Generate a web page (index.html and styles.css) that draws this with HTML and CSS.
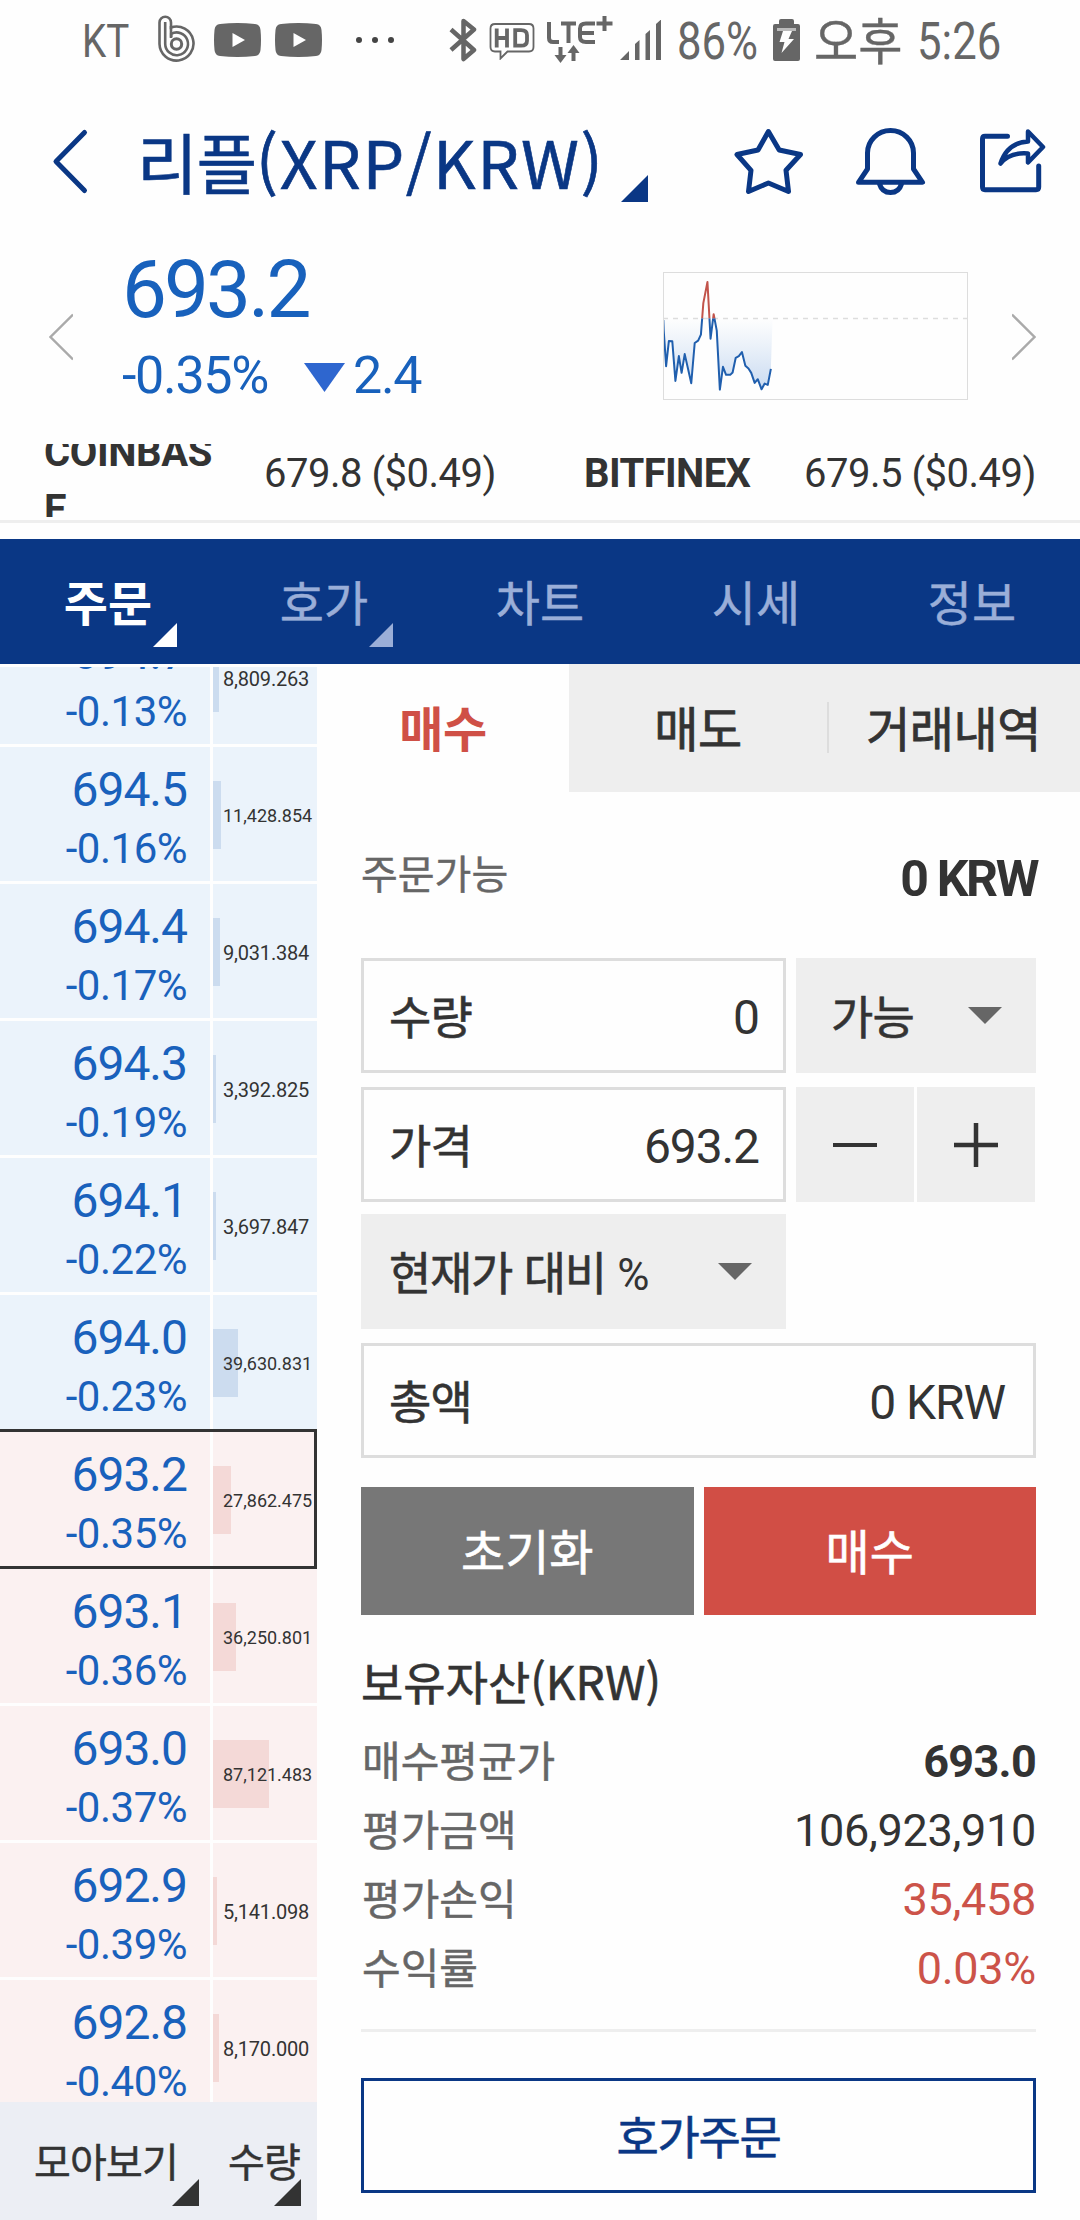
FILE: index.html
```html
<!DOCTYPE html>
<html lang="ko">
<head>
<meta charset="utf-8">
<title>리플(XRP/KRW)</title>
<link rel="stylesheet" href="styles.css">
</head>
<body>
<div class="status">
  <span class="narrow carrier">KT</span>
  <svg class="s-b" width="40" height="50" viewBox="156 15 40 50" fill="none" stroke="#666" stroke-width="2.600"><path d="M159.500 44V22.500a5.750 5.750 0 0 1 11.500 0V27.500A17 17 0 1 1 159.500 44"/><path d="M165.200 22V44a11.400 11.400 0 1 0 6-10.200V37"/><circle cx="176.500" cy="44" r="5.200" stroke-width="3"/><path d="M171 26v12"/></svg>
  <svg class="s-yt" width="47" height="34" viewBox="0 0 47 34"><path d="M6 1Q23.500-1 41 1Q46 1.500 46.500 7Q47.500 17 46.500 27Q46 32.500 41 33Q23.500 35 6 33Q1 32.500.5 27Q-.5 17 .5 7Q1 1.500 6 1Z" fill="#666"/><path d="M18.500 10v14l12.500-7z" fill="#fff"/></svg>
  <svg class="s-yt2" width="47" height="34" viewBox="0 0 47 34"><path d="M6 1Q23.500-1 41 1Q46 1.500 46.500 7Q47.500 17 46.500 27Q46 32.500 41 33Q23.500 35 6 33Q1 32.500.5 27Q-.5 17 .5 7Q1 1.500 6 1Z" fill="#666"/><path d="M18.500 10v14l12.500-7z" fill="#fff"/></svg>
  <svg class="s-dots" width="40" height="8" viewBox="0 0 40 8" fill="#444"><circle cx="4" cy="4" r="3"/><circle cx="20" cy="4" r="3"/><circle cx="36" cy="4" r="3"/></svg>
  <svg class="s-bt" width="28" height="44" viewBox="448 18 28 44" fill="none" stroke="#666" stroke-width="4.500" stroke-linejoin="round"><path d="M450 29.500L473 50l-10.500 9V21L473 29.500L450 50"/></svg>
  <svg class="s-hd" width="46" height="38" viewBox="488 22 46 38" fill="none" stroke="#666"><path d="M494 24h34q4.500 0 4.500 4.500v18.500q0 4.500-4.500 4.500H506.500l-7 7V51.500H494q-4.500 0-4.500-4.500V28.500Q489.500 24 494 24Z" stroke-width="1.800"/><path d="M495.700 28.500v19M506 28.500v19M495.700 38H506M514.200 30.200H520q6 0 6 5V40.700q0 5-6 5H514.200Z" stroke-width="3.800"/></svg>
  <svg class="s-lte" width="66" height="50" viewBox="546 15 66 50" fill="none" stroke="#666" stroke-width="4"><path d="M548 22V38Q548 42 552 42h6M560 23.500h15M567.500 23.500V43M594 23.500h-9q-6 0-6 5v8.500q0 5 6 5h9M579 33h14M595.500 23.500h16M603.500 16v15"/><path d="M559.500 47v10M572.500 61V51"/><path d="M553.500 55h12l-6 8zM566.500 53h12l-6-8z" fill="#666" stroke="none"/></svg>
  <svg class="s-sig" width="42" height="41" viewBox="619 20 42 41" fill="#666"><path d="M619 60l9-9v9zM634 60V44l4.500-4V60zM644.500 60V34l4.500-4V60zM655 60V24l5-4.500V60z"/></svg>
  <span class="narrow percent">86%</span>
  <svg class="s-bat" width="28" height="42" viewBox="0 0 28 42"><path d="M8 0h11q2 0 2 2v3h4q2 0 2 2v33q0 2-2 2H2q-2 0-2-2V7Q0 5 2 5H6V2Q6 0 8 0Z" fill="#666"/><path d="M4 9h19v3H4z" fill="#bbb"/><path d="M10 12h9l-3.500 8H21L8.500 34l3-11H6.500z" fill="#fff"/></svg>
  <span class="narrow ampm">오후</span>
  <span class="narrow clock">5:26</span>
</div>

<header class="header">
  <svg class="back" width="38" height="68" viewBox="51 129 38 68" fill="none" stroke="#0a3785" stroke-width="5" stroke-linecap="round" stroke-linejoin="round"><path d="M84.500 133.500L56 162.500L84.500 191.500"/></svg>
  <h1 class="title">리플<span class="pair">(XRP/KRW)</span></h1>
  <i class="corner corner-title"></i>
  <svg class="h-star" width="74" height="70" viewBox="732 126 74 70" fill="none" stroke="#0a3785" stroke-width="5" stroke-linejoin="round"><path d="M768.400 130.500L779.200 149L800.500 153.500L786 169.300L788.500 190.500L768.400 182L748.500 190.500L751 169.300L737 153.500L758 149Z"/></svg>
  <svg class="h-bell" width="72" height="72" viewBox="855 126 72 72" fill="none" stroke="#0a3785" stroke-width="5" stroke-linejoin="round"><path d="M858.500 182.300L867.500 169V153a23 22.500 0 0 1 46 0V169L922.500 182.300ZM879.500 184Q882 192.500 890.500 192.500T901.500 184"/></svg>
  <svg class="h-share" width="70" height="68" viewBox="978 126 70 68" fill="none" stroke="#0a3785" stroke-width="5" stroke-linejoin="round" stroke-linecap="round"><path d="M1007.500 135.300H985Q982.500 135.300 982.500 138V186Q982.500 188.700 985 188.700H1036Q1038.700 188.700 1038.700 186V165"/><path d="M1028 130.500L1043 146L1028 161.500V152.500Q1010 151 1000.500 162.500Q1007.500 141.500 1028 140.500Z" stroke-width="4.500"/></svg>
</header>

<section class="quote">
  <svg class="prev" width="24" height="48" viewBox="0 0 24 48" fill="none" stroke="#aaa" stroke-width="2.400"><path d="M24 1.500L1.500 24L24 46.500"/></svg>
  <div class="price">
    <div class="last">693.2</div>
    <div class="delta"><span class="rate">-0.35%</span><svg class="down" width="41" height="29" viewBox="0 0 41 29"><path d="M0 0h41L20.500 29z" fill="#2e66cf"/></svg><span class="diff">2.4</span></div>
  </div>
  <svg class="chart" viewBox="358 97 885 382" preserveAspectRatio="none" fill="none" stroke-width="2" stroke-linejoin="round">
    <defs><linearGradient id="g" gradientUnits="userSpaceOnUse" x1="0" y1="235" x2="0" y2="448"><stop offset="0" stop-color="#cfdff3" stop-opacity="0"/><stop offset="1" stop-color="#c8daf1"/></linearGradient>
    <clipPath id="up"><path d="M358 97H1243V235H358z"/></clipPath><clipPath id="dn"><path d="M358 235H1243V479H358z"/></clipPath></defs>
    <path clip-path="url(#dn)" fill="url(#g)" d="M358 235L360 270L367 378L375 303L385 304L394 422L404 348L412 398L421 342L440 429L450 309L460 302L468 284L472 235L491 235L496 296L505 232L514 272L523 448L532 380L541 404L553 404L560 397L569 353L578 348L587 336L597 377L606 385L614 398L624 428L633 417L644 447L653 430L662 434L671 386L676 235Z"/>
    <path class="hair" stroke="#ddd" stroke-width="1.500" stroke-dasharray="5 5" d="M358 235.500H1243"/>
    <path class="hair" clip-path="url(#dn)" stroke="#205fae" d="M359 240L360 270L367 378L375 303L385 304L394 422L404 348L412 398L421 342L440 429L450 309L460 302L468 284L475 190L487 127L496 296L505 223L514 272L523 448L532 380L541 404L553 404L560 397L569 353L578 348L587 336L597 377L606 385L614 398L624 428L633 417L644 447L653 430L662 434L671 386"/>
    <path class="hair" clip-path="url(#up)" stroke="#c2544b" d="M468 284L475 190L487 127L496 296L505 223L514 272"/>
    <path class="hair" stroke="#ddd" d="M358 97H1243V479H358z"/>
  </svg>
  <svg class="next" width="24" height="48" viewBox="0 0 24 48" fill="none" stroke="#aaa" stroke-width="2.400"><path d="M0 1.500L22.500 24L0 46.500"/></svg>
</section>

<section class="ticker">
  <div class="tick"><b class="tick-name">COINBASE</b><span>679.8 ($0.49)</span></div>
  <div class="tick"><b class="tick-name single">BITFINEX</b><span>679.5 ($0.49)</span></div>
</section>

<nav class="nav">
  <a class="on">주문<i class="corner"></i></a><a>호가<i class="corner"></i></a><a>차트</a><a>시세</a><a>정보</a>
</nav>

<main class="main">
  <aside class="side">
    <div class="book">
      <div class="rows">
        <div class="row"><div class="p"><span>694.7</span><em>-0.13%</em></div><div class="v"><i style="width:6px"></i><span>8,809.263</span></div></div>
        <div class="row"><div class="p"><span>694.5</span><em>-0.16%</em></div><div class="v long"><i style="width:8px"></i><span>11,428.854</span></div></div>
        <div class="row"><div class="p"><span>694.4</span><em>-0.17%</em></div><div class="v"><i style="width:7px"></i><span>9,031.384</span></div></div>
        <div class="row"><div class="p"><span>694.3</span><em>-0.19%</em></div><div class="v"><i style="width:3px"></i><span>3,392.825</span></div></div>
        <div class="row"><div class="p"><span>694.1</span><em>-0.22%</em></div><div class="v"><i style="width:3px"></i><span>3,697.847</span></div></div>
        <div class="row"><div class="p"><span>694.0</span><em>-0.23%</em></div><div class="v long"><i style="width:25px"></i><span>39,630.831</span></div></div>
        <div class="row bid now"><div class="p"><span>693.2</span><em>-0.35%</em></div><div class="v long"><i style="width:18px"></i><span>27,862.475</span></div></div>
        <div class="row bid"><div class="p"><span>693.1</span><em>-0.36%</em></div><div class="v long"><i style="width:23px"></i><span>36,250.801</span></div></div>
        <div class="row bid"><div class="p"><span>693.0</span><em>-0.37%</em></div><div class="v long"><i style="width:56px"></i><span>87,121.483</span></div></div>
        <div class="row bid"><div class="p"><span>692.9</span><em>-0.39%</em></div><div class="v"><i style="width:4px"></i><span>5,141.098</span></div></div>
        <div class="row bid"><div class="p"><span>692.8</span><em>-0.40%</em></div><div class="v"><i style="width:6px"></i><span>8,170.000</span></div></div>
      </div>
    </div>
    <div class="foot"><span class="f1">모아보기<i class="corner"></i></span><span class="f2">수량<i class="corner"></i></span></div>
  </aside>

  <section class="order">
    <div class="tabs"><div class="tab on">매수</div><div class="tab">매도</div><div class="tab split">거래내역</div></div>
    <div class="form">
      <div class="avail"><span>주문가능</span><b>0 KRW</b></div>
      <div class="line"><div class="field w"><span>수량</span><span class="num">0</span></div><div class="sel s1"><span>가능</span><svg width="34" height="17" viewBox="0 0 34 17"><path d="M0 0h34L17 17z" fill="#666"/></svg></div></div>
      <div class="line l2"><div class="field w"><span>가격</span><span class="num">693.2</span></div><div class="step"><div><svg width="44" height="44" viewBox="0 0 44 44"><path d="M0 22h44" stroke="#333" stroke-width="4"/></svg></div><div><svg width="44" height="44" viewBox="0 0 44 44"><path d="M0 22h44M22 0v44" stroke="#333" stroke-width="4.500"/></svg></div></div></div>
      <div class="sel s2"><span>현재가 대비 <small>%</small></span><svg width="34" height="17" viewBox="0 0 34 17"><path d="M0 0h34L17 17z" fill="#666"/></svg></div>
      <div class="field total"><span>총액</span><span class="num">0 KRW</span></div>
      <div class="btns"><div class="btn reset">초기화</div><div class="btn buy">매수</div></div>
      <h2 class="assets">보유자산(KRW)</h2>
      <dl class="list">
        <dt>매수평균가</dt><dd class="strong">693.0</dd>
        <dt>평가금액</dt><dd>106,923,910</dd>
        <dt>평가손익</dt><dd class="red">35,458</dd>
        <dt>수익률</dt><dd class="red">0.03%</dd>
      </dl>
      <div class="quoteorder">호가주문</div>
    </div>
  </section>
</main>
</body>
</html>
```
FILE: styles.css
```css
* { box-sizing: border-box; }
body { margin: 0; width: 1080px; height: 2220px; overflow: hidden; background: #fefefe; color: #333; font-family: Roboto, "Noto Sans CJK KR", sans-serif; }
svg { display: block; flex: none; }
h1, h2, dl, dd { margin: 0; font-weight: 400; }

.corner { display: block; width: 24px; height: 24px; background: currentColor; clip-path: polygon(100% 0, 100% 100%, 0 100%); }

.status { display: flex; align-items: center; height: 80px; padding-left: 82px; color: #666; }
.narrow { display: block; flex: none; white-space: nowrap; transform-origin: 0 50%; transform: scaleX(.84); line-height: 80px; height: 80px; }
.carrier { width: 48px; font-size: 46px; padding-top: 1px; }
.s-b { margin-left: 26px; }
.s-yt { margin-left: 18px; }
.s-yt2 { margin-left: 14px; }
.s-dots { margin-left: 33px; }
.s-bt { margin-left: 54px; }
.s-hd { margin-left: 12px; margin-top: 2px; }
.s-lte { margin-left: 12px; }
.s-sig { margin-left: 7px; }
.percent { width: 78px; margin-left: 15px; font-size: 52px; padding-top: 2px; }
.s-bat { margin-left: 18px; }
.ampm { width: 90px; margin-left: 13px; font: 50px/76px "Noto Sans CJK KR", sans-serif; transform: scaleX(.96); -webkit-text-stroke: .4px; }
.clock { margin-left: 13px; font-size: 52px; padding-top: 2px; }

.header { display: flex; align-items: center; height: 164px; padding-left: 51px; color: #0a3785; }
.title { width: 474px; margin: -5px 0 0 48px; font: 66px/96px "Noto Sans CJK KR", sans-serif; letter-spacing: -1.3px; white-space: nowrap; -webkit-text-stroke: .6px; }
.pair { letter-spacing: 1.5px; }
.corner-title { width: 27px; height: 27px; margin: 53px 0 0 10px; }
.h-star { margin-left: 84px; }
.h-bell { margin-left: 49px; }
.h-share { margin-left: 51px; margin-top: -3px; }

.quote { display: flex; align-items: flex-start; height: 200px; padding-left: 49px; color: #1861bc; }
.prev, .next { margin-top: 69px; }
.price { width: 541px; margin: -1px 0 0 49px; }
.last { font-size: 80px; line-height: 94px; letter-spacing: -2.900px; }
.delta { display: flex; margin-top: 8px; font-size: 52px; line-height: 62px; letter-spacing: -1.3px; }
.rate { width: 182px; }
.down { margin-top: 18px; }
.diff { margin-left: 8px; }
.chart { width: 305px; height: 128px; margin-top: 28px; }
.hair { vector-effect: non-scaling-stroke; }
.next { margin-left: 44px; }

.ticker { display: flex; height: 73px; overflow: hidden; padding-left: 44px; font-size: 40px; }
.tick { display: flex; align-items: center; flex: none; width: 540px; letter-spacing: -.5px; }
.tick span, .single { margin-top: -14px; white-space: nowrap; }
.tick .tick-name { width: 175px; margin-right: 45px; line-height: 57px; letter-spacing: -.400px; word-break: break-all; }
.tick .single { letter-spacing: -.6px; }

.nav { display: flex; height: 144px; border-top: 3px solid #eee; margin-top: 3px; padding-top: 16px; background: #0a3785 content-box; }
.nav a { position: relative; width: 216px; text-align: center; font: 48px/122px "Noto Sans CJK KR", sans-serif; color: #9aaed8; -webkit-text-stroke: .5px; }
.nav .on { color: #fff; font-weight: 700; -webkit-text-stroke: 0; }
.nav .corner { position: absolute; right: 39px; bottom: 17px; }

.main { display: flex; height: 1556px; }
.side { width: 317px; padding-top: 3px; display: flex; flex-direction: column; }
.book { height: 1435px; overflow: hidden; }
.rows { display: flex; flex-direction: column; gap: 3px; margin-top: -57px; }
.row { display: flex; gap: 3px; height: 134px; flex: none; --bg: #ebf3fb; --bar: #ccdcef; }
.bid { --bg: #fbf1f1; --bar: #f4d9d7; }
.now { margin: -3px 0; height: 140px; border: 3px solid #333; border-left: 0; }
.p { width: 210px; padding: 13px 23px 0 0; background: var(--bg); color: #1961bc; text-align: right; line-height: 59px; }
.p span, .p em { display: block; font-style: normal; }
.p span { font-size: 48px; letter-spacing: -1px; }
.p em { font-size: 42px; letter-spacing: -.5px; }
.v { flex: 1; display: grid; grid-template-columns: 10px 1fr; background: var(--bg); font-size: 20px; line-height: 139px; letter-spacing: -.2px; white-space: nowrap; }
.v i { grid-area: 1 / 1; height: 68px; margin-top: 34px; background: var(--bar); }
.v span { grid-area: 1 / 2; width: 0; position: relative; }
.long { font-size: 18px; line-height: 137px; letter-spacing: 0; }
.foot { display: flex; height: 118px; background: #eceef4; font: 40px/116px "Noto Sans CJK KR", sans-serif; letter-spacing: -.8px; -webkit-text-stroke: .5px; }
.foot span { position: relative; }
.f1 { width: 210px; padding-left: 34px; }
.f2 { width: 107px; padding-left: 18px; }
.foot .corner { position: absolute; width: 27px; height: 27px; bottom: 14px; }
.f1 .corner { right: 11px; }
.f2 .corner { right: 16px; }

.order { width: 763px; }
.tabs { display: flex; height: 128px; font: 48px/125px "Noto Sans CJK KR", sans-serif; letter-spacing: -.5px; text-align: center; background: #eee; -webkit-text-stroke: .8px; }
.tab { width: 258px; }
.tabs .on { width: 252px; background: #fefefe; color: #cf5046; font-weight: 700; -webkit-text-stroke: 0; }
.tabs .split { width: 253px; background: linear-gradient(#ddd, #ddd) -1px 38px / 3px 51px no-repeat; }
.form { padding: 0 44px; font: 46px "Noto Sans CJK KR", sans-serif; letter-spacing: -.8px; -webkit-text-stroke: .6px; }
.avail { display: flex; justify-content: space-between; height: 166px; line-height: 160px; font-size: 40px; letter-spacing: 0; color: #666; -webkit-text-stroke: .4px; }
.avail b { font: 700 50px/174px Roboto, sans-serif; color: #333; letter-spacing: -2.4px; margin-right: -1px; -webkit-text-stroke: 0; }
.line { display: flex; gap: 10px; }
.l2 { margin-top: 14px; }
.field { display: flex; justify-content: space-between; height: 115px; padding: 0 24px 0 25px; border: 3px solid #ddd; line-height: 107px; }
.w { width: 425px; }
.num { font: 48px/113px Roboto, sans-serif; letter-spacing: -1.1px; -webkit-text-stroke: 0; }
.sel { display: flex; justify-content: space-between; height: 115px; background: #eee; line-height: 113px; padding-right: 34px; }
.sel svg { margin-top: 49px; }
.s1 { width: 240px; padding-left: 35px; }
.s2 { width: 425px; margin-top: 12px; padding-left: 28px; letter-spacing: -1.300px; }
.s2 small { font: 44px Roboto, sans-serif; -webkit-text-stroke: 0; }
.step { display: flex; gap: 3px; }
.step div { display: flex; align-items: center; justify-content: center; width: 118px; height: 115px; background: #eee; }
.total { margin-top: 14px; padding-right: 28px; }
.btns { display: flex; gap: 10px; margin-top: 29px; color: #fff; font-size: 48px; line-height: 125px; letter-spacing: 0; text-align: center; }
.btn { flex: 1; height: 128px; }
.reset { background: #777; }
.buy { background: #d14e45; }
.assets { margin-top: 33px; height: 77px; font-size: 46px; line-height: 64px; letter-spacing: 0; }
.list { display: grid; grid-template-columns: auto auto; grid-auto-rows: 69px; height: 307px; border-bottom: 3px solid #eee; line-height: 67px; }
.list dt { font-size: 42px; letter-spacing: 0; color: #666; padding-left: 1px; -webkit-text-stroke: .5px; }
.list dd { font: 45px/73px Roboto, sans-serif; text-align: right; letter-spacing: -.3px; -webkit-text-stroke: 0; }
.list .strong { font-weight: 700; letter-spacing: -.7px; }
.red { color: #cc5349; }
.quoteorder { margin-top: 46px; height: 115px; border: 3px solid #0a3785; color: #0a3785; line-height: 107px; letter-spacing: -1.300px; text-align: center; }
```
